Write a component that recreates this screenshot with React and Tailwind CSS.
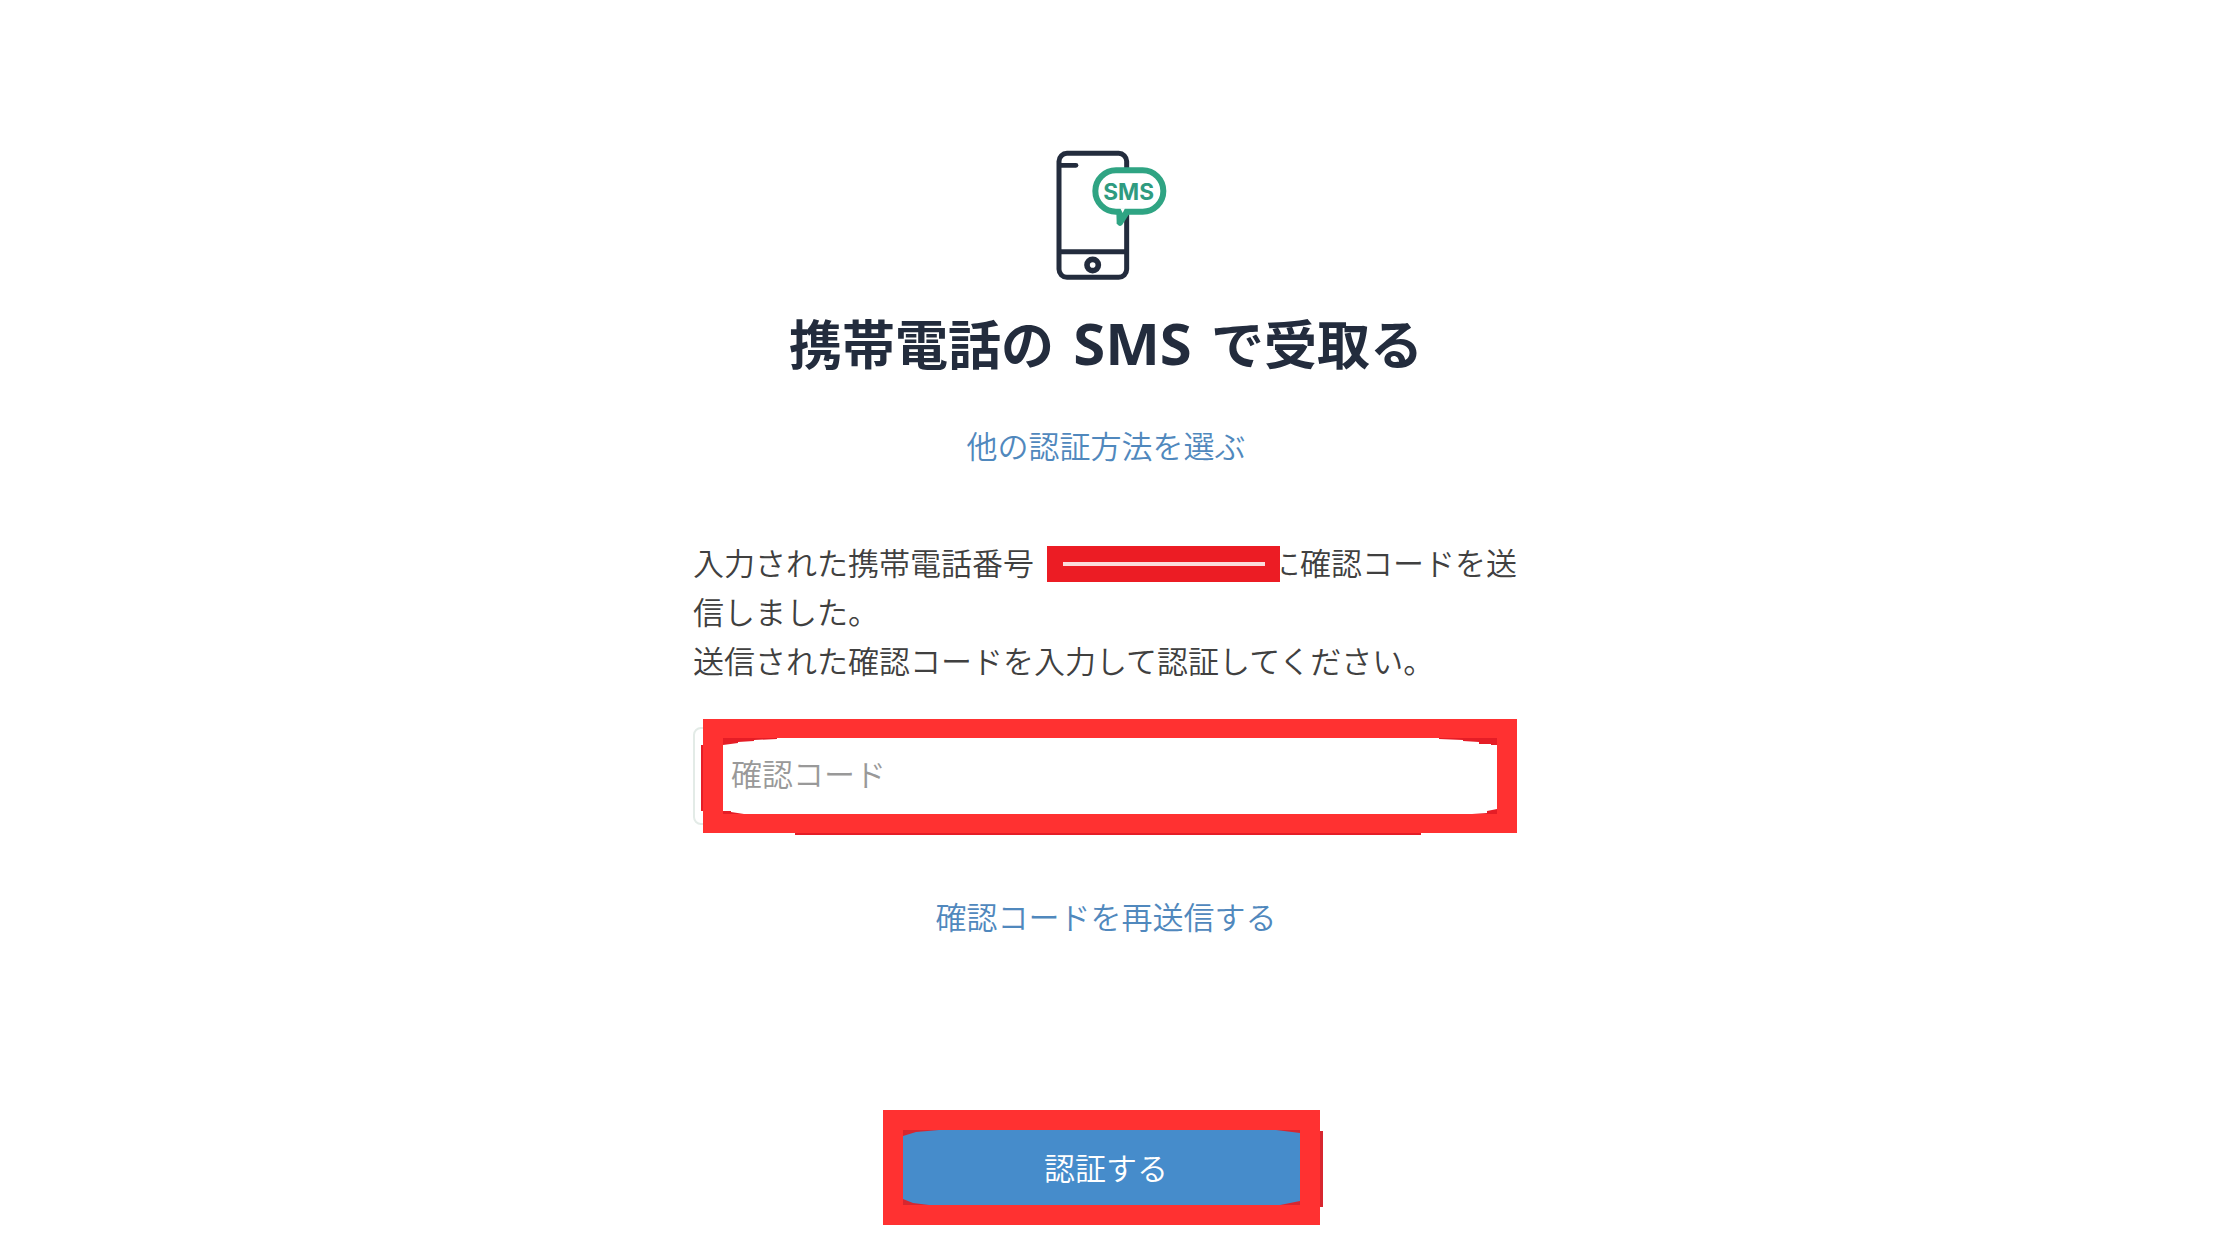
import React, { useState } from "react";

const PhoneSmsIcon = () => (
  <svg
    viewBox="45 60 366 390"
    className="w-[122px] h-[130px]"
    fill="none"
    aria-hidden="true"
  >
    <rect x="87" y="70" width="203" height="372" rx="24" stroke="#232c3d" strokeWidth="15" />
    <path d="M92 106H138" stroke="#232c3d" strokeWidth="14" strokeLinecap="round" />
    <path d="M87 365H290" stroke="#232c3d" strokeWidth="15" />
    <circle cx="188" cy="405" r="17" stroke="#232c3d" strokeWidth="17" />
    {/* speech bubble */}
    <rect x="196" y="121" width="204" height="124" rx="62" fill="#fff" stroke="#2fa483" strokeWidth="18" />
    <path d="M259 244L260 280Q267 294 277 284L299 250V240Z" fill="#2fa483" />
    <path d="M271 235H285L278 249Z" fill="#fff" />
    <text
      x="296"
      y="211"
      textAnchor="middle"
      fill="#2f9b80"
      className="font-['Inter',sans-serif] font-bold text-[68px]"
    >
      SMS
    </text>
  </svg>
);

const InputMarker = () => (
  <svg
    viewBox="0 0 819 118"
    preserveAspectRatio="none"
    className="absolute left-[7px] -top-[9px] w-[calc(100%-7px)] h-[118px] pointer-events-none"
    aria-hidden="true"
  >
    <g fill="#e51d26">
      <path d="M1 27H3V93H1Z" />
      <path d="M95 114H721V117H95Z" />
      <path d="M23 19V27L38 25V24L54 23V22L77 21V19Z" />
      <path d="M797 19V27H791V26H779V24L763 23V22L739 21V19Z" />
      <path d="M23 97V93H31V94L44 96V97Z" />
      <path d="M797 97V91L787 93V95L772 96V97Z" />
    </g>
    <path fillRule="evenodd" fill="#ff3131" d="M3 1H817V115H3ZM23 20V96H797V20Z" />
  </svg>
);

const ButtonMarker = () => (
  <svg
    viewBox="0 0 441 118"
    preserveAspectRatio="none"
    className="absolute -left-[13px] -top-[13px] w-[441px] h-[118px] pointer-events-none"
    aria-hidden="true"
  >
    <g fill="#d8262f">
      <path d="M436 22H440V98H436Z" />
      <path d="M20 20V27L33 23L56 21V20Z" />
      <path d="M417 20V24L393 21V20Z" />
      <path d="M20 97V90L30 94L46 96V97Z" />
      <path d="M417 97V92L397 96V97Z" />
    </g>
    <path fillRule="evenodd" fill="#ff3131" d="M0 1H437V116H0ZM20 21V96H417V21Z" />
  </svg>
);

const App = () => {
  const [code, setCode] = useState("");

  return (
    <div className="flex justify-center bg-white pr-7 font-['Noto_Sans_CJK_JP',sans-serif] text-[31px] leading-[49px] font-[350] text-[#404040]">
      <main className="w-full max-w-[826px] pt-[150px] pb-8">
        <form
          className="flex flex-col items-center"
          onSubmit={(e) => e.preventDefault()}
        >
          <PhoneSmsIcon />

          <h1 className="mt-[22px] text-[53px] leading-[80px] font-bold text-[#232c3d] whitespace-nowrap">
            携帯電話の
            <span className="mx-1 font-['Noto_Sans',sans-serif] text-[58px]"> SMS </span>
            で受取る
          </h1>

          <a href="#methods" className="mt-[37px] text-[#5088bd]">
            他の認証方法を選ぶ
          </a>

          <p className="mt-[68px] w-full">
            <span>入力された携帯電話番号</span>
            <span className="inline-flex items-center justify-center align-[9px] ml-[13px] -mr-[11px] relative w-[233px] h-9 bg-[#ec1c24]">
              <span className="w-[202px] h-1 bg-[#fbdcdc]" />
            </span>
            <span>に確認コードを送</span>
            <span>信しました。</span>
            <br />
            送信された確認コードを入力して認証してください。
          </p>

          <div className="relative mt-[43px] w-full">
            <input
              type="text"
              aria-label="確認コード"
              placeholder="確認コード"
              value={code}
              onChange={(e) => setCode(e.target.value)}
              className="block w-[calc(100%-8px)] h-[98px] pl-9 pr-8 pb-2 border-2 border-[#e3ebe7] rounded-lg outline-none placeholder:text-[#999999]"
            />
            <InputMarker />
          </div>

          <a href="#resend" className="mt-[66px] text-[#5088bd]">
            確認コードを再送信する
          </a>

          <div className="relative mt-[182px]">
            <button
              type="submit"
              className="block w-[420px] h-[92px] pb-1 rounded-lg bg-[#468ccb] text-white cursor-pointer"
            >
              認証する
            </button>
            <ButtonMarker />
          </div>
        </form>
      </main>
    </div>
  );
};

export default App;
